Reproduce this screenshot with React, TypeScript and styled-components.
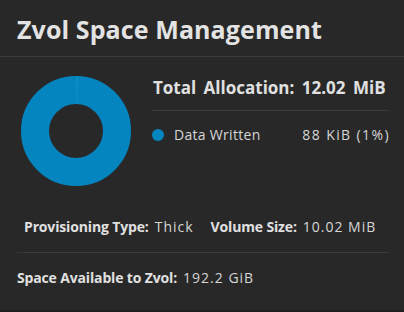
import React from "react";
import styled, { createGlobalStyle } from "styled-components";

const Global = createGlobalStyle`
  html, body { margin: 0; padding: 0; background: #282828; }
  body { font-family: "Open Sans", "Noto Sans", sans-serif; }
`;

const Card = styled.div`
  width: 404px;
  height: 310px;
  background: #282828;
  border-bottom: 2px solid #1e1e1e;
  color: #e0e0e0;
  display: flex;
  flex-direction: column;
`;

const Header = styled.div`
  height: 57px;
  border-bottom: 1px solid #3a3a3a;
  display: flex;
  align-items: center;
  padding: 0 17px;
  box-sizing: border-box;
`;

const Title = styled.h1`
  margin: 0;
  margin-top: 1px;
  font-family: "Open Sans", sans-serif;
  font-weight: 700;
  font-size: 25px;
  letter-spacing: 0.1px;
  color: #e3e3e3;
`;

const Top = styled.div`
  display: flex;
  align-items: flex-start;
  padding: 19px 15px 0 21px;
  gap: 21px;
`;

const Legend = styled.div`
  flex: 1;
  display: flex;
  flex-direction: column;
`;

const Total = styled.div`
  font-weight: 700;
  font-size: 17px;
  color: #e0e0e0;
  padding: 0 0 11px 1px;
  border-bottom: 1px solid #3a3a3a;
  word-spacing: 3px;
`;

const Row = styled.div`
  display: flex;
  align-items: center;
  margin-top: 14px;
  font-size: 14px;
  letter-spacing: 0.3px;
  color: #d6d6d6;
`;

const Dot = styled.span<{ $color: string }>`
  width: 12px;
  height: 12px;
  border-radius: 50%;
  background: ${(p) => p.$color};
  margin-right: 10px;
`;

const Grow = styled.span`
  flex: 1;
`;

const Amount = styled.span`
  letter-spacing: 1.4px;
  margin-right: -1px;
`;

const Facts = styled.div`
  display: flex;
  flex-direction: column;
  padding: 0 15px 0 17px;
  margin-top: 31px;
`;

const FactLine = styled.div<{ $indent?: number; $border?: boolean }>`
  display: flex;
  align-items: baseline;
  gap: 17px;
  padding-left: ${(p) => p.$indent ?? 0}px;
  padding-bottom: ${(p) => (p.$border ? 16 : 0)}px;
  margin-bottom: ${(p) => (p.$border ? 15 : 0)}px;
  border-bottom: ${(p) => (p.$border ? "1px solid #3a3a3a" : "none")};
`;

const Fact = styled.span`
  display: inline-flex;
  align-items: baseline;
  gap: 6px;
  font-size: 14px;
`;

const Label = styled.b`
  font-weight: 700;
  color: #e0e0e0;
  letter-spacing: -0.15px;
`;

const Value = styled.span`
  color: #d6d6d6;
  letter-spacing: 1px;
`;

function Donut() {
  const r = 41;
  const c = 2 * Math.PI * r;
  const pct = 0.007;
  return (
    <svg width="110" height="110" viewBox="0 0 110 110">
      <circle cx="55" cy="55" r={r} fill="none" stroke="#0585bf" strokeWidth="28" />
      <circle
        cx="55"
        cy="55"
        r={r}
        fill="none"
        stroke="#0a8cc9"
        strokeWidth="28"
        strokeDasharray={`${c * pct} ${c}`}
        transform="rotate(-90 55 55)"
      />
    </svg>
  );
}

export default function App() {
  return (
    <>
      <Global />
      <Card>
        <Header>
          <Title>Zvol Space Management</Title>
        </Header>
        <Top>
          <Donut />
          <Legend>
            <Total>Total Allocation: 12.02 MiB</Total>
            <Row>
              <Dot $color="#0585bf" />
              <Grow>Data Written</Grow>
              <Amount>88 KiB (1%)</Amount>
            </Row>
          </Legend>
        </Top>
        <Facts>
          <FactLine $indent={7} $border>
            <Fact>
              <Label>Provisioning Type:</Label>
              <Value>Thick</Value>
            </Fact>
            <Fact>
              <Label>Volume Size:</Label>
              <Value>10.02 MiB</Value>
            </Fact>
          </FactLine>
          <FactLine>
            <Fact>
              <Label>Space Available to Zvol:</Label>
              <Value>192.2 GiB</Value>
            </Fact>
          </FactLine>
        </Facts>
      </Card>
    </>
  );
}
